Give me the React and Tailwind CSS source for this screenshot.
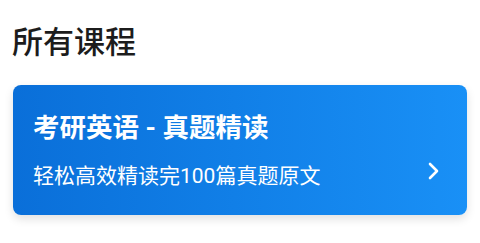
export default function App() {
  return (
    <div
      className="w-[480px] h-[243px] bg-white overflow-hidden"
      style={{ fontFamily: 'Roboto, "Noto Sans CJK SC", sans-serif' }}
    >
      {/* HEADER */}
      <h1 className="pl-[12px] pt-[23px] text-[31px] leading-[40px] font-medium text-[#1c1c1c]">
        所有课程
      </h1>

      {/* CARD */}
      <div className="mx-[13px] mt-[22px] h-[130px] rounded-[8px] bg-gradient-to-r from-[#0a6fd9] to-[#1990f6] shadow-[0_4px_10px_rgba(0,0,0,0.12)] flex items-center justify-between pl-[20px] pr-[26px]">
        <div className="text-white">
          <p className="text-[26.5px] leading-[34px] font-bold">考研英语 - 真题精读</p>
          <p className="mt-[17px] text-[21px] leading-[28px]">轻松高效精读完100篇真题原文</p>
        </div>
        <svg width="14" height="20" viewBox="0 0 14 20" className="mt-[42px]">
          <path d="M3 3 L10 10 L3 17" fill="none" stroke="white" strokeWidth="2.6" strokeLinecap="round" strokeLinejoin="round" />
        </svg>
      </div>
    </div>
  );
}
